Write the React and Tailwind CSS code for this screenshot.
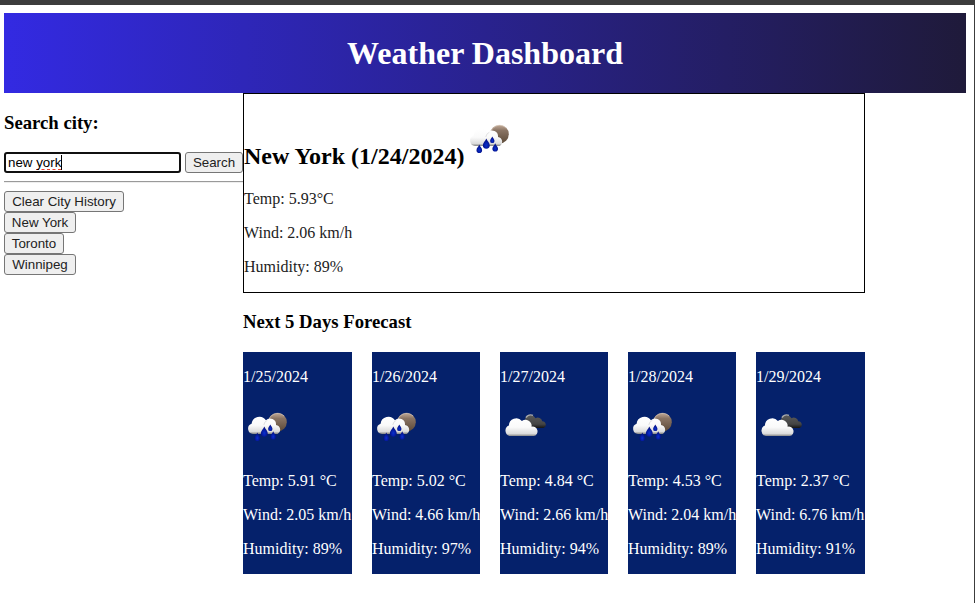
const forecast = [
  { date: '1/25/2024', icon: 'rain', temp: '5.91', wind: '2.05', humidity: 89 },
  { date: '1/26/2024', icon: 'rain', temp: '5.02', wind: '4.66', humidity: 97 },
  { date: '1/27/2024', icon: 'clouds', temp: '4.84', wind: '2.66', humidity: 94 },
  { date: '1/28/2024', icon: 'rain', temp: '4.53', wind: '2.04', humidity: 89 },
  { date: '1/29/2024', icon: 'clouds', temp: '2.37', wind: '6.76', humidity: 91 },
];

const cities = ['New York', 'Toronto', 'Winnipeg'];

// Shared gradients for the weather icons.
function Gradients() {
  return (
    <svg width="0" height="0" className="absolute" aria-hidden="true">
      <defs>
        <linearGradient id="cloud" x1="0" y1="0" x2="0" y2="1">
          <stop offset="0" stopColor="#ffffff" />
          <stop offset="0.5" stopColor="#fafafa" />
          <stop offset="0.86" stopColor="#dcdcdc" />
          <stop offset="1" stopColor="#858585" />
        </linearGradient>
        <linearGradient id="moon" x1="0" y1="0" x2="0" y2="1">
          <stop offset="0" stopColor="#c3ab98" />
          <stop offset="0.3" stopColor="#8a7464" />
          <stop offset="1" stopColor="#5c4937" />
        </linearGradient>
        <linearGradient id="dark" x1="0" y1="0" x2="0" y2="1">
          <stop offset="0" stopColor="#5a5a5a" />
          <stop offset="0.7" stopColor="#444444" />
          <stop offset="1" stopColor="#151515" />
        </linearGradient>
        <radialGradient id="drop" cx="0.5" cy="0.65" r="0.6">
          <stop offset="0" stopColor="#0a30d0" />
          <stop offset="1" stopColor="#020a78" />
        </radialGradient>
      </defs>
    </svg>
  );
}

function Drop({ x, y, s }) {
  return (
    <path
      transform={`translate(${x} ${y}) scale(${s})`}
      d="M0 -5C.7 -2.8 3.2 -1 3.2 1.3A3.2 3.2 0 0 1 -3.2 1.3C-3.2 -1 -.7 -2.8 0 -5Z"
      fill="url(#drop)"
    />
  );
}

function WeatherIcon({ kind, className }) {
  return (
    <svg width="50" height="50" viewBox="0 0 50 50" className={className}>
      {kind === 'rain' ? (
        <>
          <circle cx="34.5" cy="20.2" r="9.3" fill="url(#moon)" />
          <path d="M26.2 17A9 9 0 0 1 41 14" fill="none" stroke="#d9c9bb" strokeWidth="0.8" opacity="0.8" />
          <path
            d="M10 31.9A5.2 5.2 0 0 1 8.6 21.8A7.8 7.8 0 0 1 22.9 18.3A5.9 5.9 0 0 1 33 22.9A4.8 4.8 0 0 1 34.6 31.9Z"
            fill="url(#cloud)"
          />
          <path d="M20.8 23A6.2 6.2 0 0 1 24.4 18.2" fill="none" stroke="#cfcfcf" strokeWidth="0.6" />
          <Drop x={14.3} y={35} s={0.88} />
          <Drop x={21.3} y={29.8} s={1.08} />
          <Drop x={27.3} y={26} s={0.68} />
          <Drop x={30.2} y={33.6} s={0.88} />
        </>
      ) : (
        <>
          <path
            d="M28 26L25 17.5A5.7 5.7 0 0 1 35.5 16.2A4.4 4.4 0 0 1 42.2 19.2A3.5 3.5 0 0 1 43.4 26Z"
            fill="url(#dark)"
          />
          <path d="M25.9 15.6A5.6 5.6 0 0 1 33 13.4" fill="none" stroke="#aaaaaa" strokeWidth="1.4" />
          <path
            d="M10 34.1A5.5 5.5 0 0 1 8.9 23.6A7.4 7.4 0 0 1 21.9 18.9A6.2 6.2 0 0 1 31.6 24.7A4.8 4.8 0 0 1 33.8 34.1Z"
            fill="url(#cloud)"
          />
        </>
      )}
    </svg>
  );
}

function Button({ children, className }) {
  return (
    <button
      className={`h-[21px] shrink-0 whitespace-nowrap rounded-[3px] border border-[#767676] bg-[#efefef] text-center font-['Liberation_Sans',Arial,sans-serif] text-[13.333px] leading-[19px] text-[#222] ${className}`}
    >
      {children}
    </button>
  );
}

const cityWidths = ['w-[72px]', 'w-[60px]', 'w-[72px]'];

export default function App() {
  return (
    <div className="h-[603px] overflow-hidden border-r border-t-[5px] border-r-[#3c3c3c] border-t-[#3c3c3c] bg-white pl-1 pr-2 pt-2 font-['Liberation_Serif','Times_New_Roman',serif] text-base leading-[18px] text-black">
      <Gradients />
      <header className="flex h-20 items-center justify-center bg-linear-to-r/srgb from-[#332ae2] to-[#1f1a3a]">
        <h1 className="text-[32px] font-bold leading-9 text-white">Weather Dashboard</h1>
      </header>
      <div className="flex">
        <aside className="w-[239px] shrink-0">
          <h3 className="mt-[19px] text-[18.72px] font-bold leading-[22px]">Search city:</h3>
          <div className="mt-[18px] flex gap-1">
            <div className="flex h-[21px] w-[177px] items-center rounded-[3px] border-2 border-[#101010] pl-0.5 font-['Liberation_Sans',Arial,sans-serif] text-[13.333px] leading-[15px]">
              <span className="whitespace-pre">new </span>
              <span className="h-[15px] border-b border-dashed border-[#e8432e]">york</span>
              <span className="h-[15px] w-px bg-black" />
            </div>
            <Button className="w-[58px]">Search</Button>
          </div>
          <hr className="mt-2 h-0.5 border-b border-t border-b-[#eeeeee] border-t-[#9a9a9a]" />
          <div className="mt-2 flex flex-col items-start">
            <Button className="w-[120px]">Clear City History</Button>
            {cities.map((city, i) => (
              <Button key={city} className={cityWidths[i]}>
                {city}
              </Button>
            ))}
          </div>
        </aside>
        <main className="w-[622px] shrink-0">
          <section className="flex h-[200px] flex-col border border-black pt-5">
            <h2 className="flex h-14 items-start text-2xl font-bold">
              <span className="mt-7 leading-7">New York (1/24/2024)</span>
              <WeatherIcon kind="rain" className="ml-px" />
            </h2>
            <div className="mt-5 flex flex-col gap-4 text-[#222]">
              <p>Temp: 5.93°C</p>
              <p>Wind: 2.06 km/h</p>
              <p>Humidity: 89%</p>
            </div>
          </section>
          <h3 className="mt-[18px] text-[18.72px] font-bold leading-[22px]">Next 5 Days Forecast</h3>
          <div className="mt-[19px] grid grid-cols-[109px_108px_108px_108px_109px] gap-5">
            {forecast.map((day) => (
              <article key={day.date} className="flex h-[222px] min-w-0 flex-col gap-4 whitespace-nowrap bg-[#05216b] pt-4 text-white">
                <p>{day.date}</p>
                <WeatherIcon kind={day.icon} className="mb-1 shrink-0" />
                <p>Temp: {day.temp} °C</p>
                <p>Wind: {day.wind} km/h</p>
                <p>Humidity: {day.humidity}%</p>
              </article>
            ))}
          </div>
        </main>
      </div>
    </div>
  );
}
